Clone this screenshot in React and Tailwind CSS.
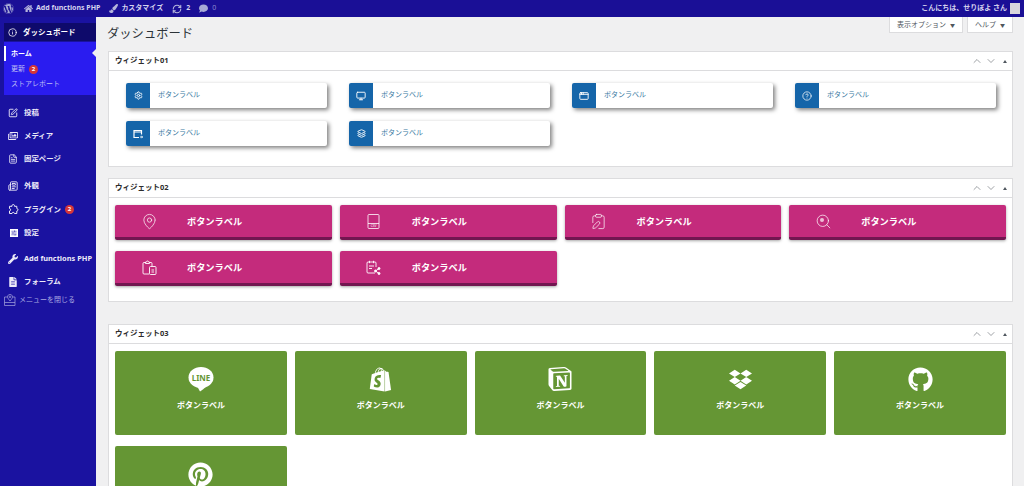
// WordPress admin dashboard with three button widgets
import { Info, SquarePen, FileText, Newspaper, SlidersHorizontal, RefreshCw, ChevronUp, ChevronDown, Settings, Monitor, AppWindow, CircleHelp, Layers, MapPin, ClipboardPen, Search } from 'lucide-react'
import { FaWordpress, FaDropbox, FaGithub, FaPinterest, FaShopify, FaHome, FaPaintBrush, FaComment, FaWrench, FaFileAlt, FaRegImages } from 'react-icons/fa'
import { SiNotion } from 'react-icons/si'

const LABEL = 'ボタンラベル'

function LineIcon() {
  return (
    <svg width="26" height="25" viewBox="0 0 26 25">
      <ellipse cx="13" cy="10.500" rx="12.500" ry="10.500" fill="white" />
      <path d="M9 19l3 5.500c1.500-1 5-3.500 6-5z" fill="white" />
      <text x="13" y="13.500" fontSize="8" fontWeight="700" textAnchor="middle" fill="#659634">LINE</text>
    </svg>
  )
}

function CsvIcon() {
  return (
    <svg width="13" height="15" viewBox="0 0 13 15" fill="none" stroke="currentColor" strokeWidth="0.8">
      <path d="M2 .5h9a1 1 0 0 1 1 1v12a1 1 0 0 1-1 1H2a1 1 0 0 1-1-1v-12a1 1 0 0 1 1-1zM1 9.500h11" />
      <text x="6.500" y="13" fontSize="3.200" textAnchor="middle" fill="currentColor" stroke="none">CSV</text>
    </svg>
  )
}

function ClipFileIcon() {
  return (
    <svg width="15" height="15" viewBox="0 0 15 15" fill="none" stroke="currentColor" strokeWidth="0.9">
      <path d="M7 14H2a1 1 0 0 1-1-1V3.500a1 1 0 0 1 1-1h1.500M7.500 2.500H9a1 1 0 0 1 1 1V6M3.500 3.500V2h1a1 1 0 0 1 2 0h1v1.500z" />
      <rect x="7.500" y="6.500" width="6.500" height="8" rx="1" />
      <path d="M9.500 10h2.500M9.500 12h2.500" />
    </svg>
  )
}

function CalendarShareIcon() {
  return (
    <svg width="15" height="15" viewBox="0 0 15 15" fill="none" stroke="currentColor" strokeWidth="0.9">
      <path d="M9 13H2a1 1 0 0 1-1-1V3a1 1 0 0 1 1-1h7a1 1 0 0 1 1 1v4M3.500 .8v2.400M7.500 .8v2.400M3 6h5M3 8.500h3" />
      <circle cx="13" cy="8.500" r="1" fill="currentColor" />
      <circle cx="9.500" cy="11" r="1" fill="currentColor" />
      <circle cx="13" cy="13.500" r="1" fill="currentColor" />
      <path d="M13 8.500l-3.500 2.500 3.500 2.500" />
    </svg>
  )
}

function ZoomIcon() {
  return (
    <span className="relative flex items-center justify-center">
      <Search size={17} strokeWidth={1} />
      <span className="absolute left-[5px] top-[5px] h-[4px] w-[4px] rounded-full bg-white/70" />
    </span>
  )
}

function WindowArrowIcon() {
  return (
    <svg width="10" height="10" viewBox="0 0 10 10" fill="none" stroke="currentColor" strokeWidth="1.200">
      <path d="M8.500 5.500V1.500h-7.500v7h5M1 3h7.500" />
      <path d="M7 8h2.500M8.500 6.800l1 1.200-1 1.200" strokeWidth="0.9" />
    </svg>
  )
}

function PluginIcon() {
  return (
    <svg width="11" height="11" viewBox="0 0 11 11" fill="none" stroke="currentColor" strokeWidth="1">
      <path d="M4 1.500c0-1.200 2.500-1.200 2.500 0v.8h2.300v2.200c1.600 0 1.600 2.500 0 2.500v2.500H6.500c0-1.500-2.500-1.500-2.500 0H1.500V7c1.500 0 1.500-2.500 0-2.500V2.300H4z" />
    </svg>
  )
}

function CloseMenuIcon() {
  return (
    <svg width="12" height="12" viewBox="0 0 12 12" fill="none" stroke="currentColor" strokeWidth="0.7">
      <path d="M3.500 3H.5v8.500h10.500V3H8.500M.5 8.500h10.500" />
      <path d="M6 .5c1.500 0 2.500 1 2.500 2.300C8.500 4.300 7 5.500 6 7 5 5.500 3.500 4.300 3.500 2.800 3.500 1.500 4.500.5 6 .5z" />
      <circle cx="6" cy="2.800" r="0.800" />
    </svg>
  )
}

function BlueButton({ icon }) {
  return (
    <a className="flex h-[25px] overflow-hidden rounded-[2px] bg-white shadow-[2px_2px_4px_rgba(0,0,0,0.5)]">
      <span className="flex w-[24px] items-center justify-center bg-[#1565a9] text-white">{icon}</span>
      <span className="flex items-center pl-[8px] text-[7px] text-[#3a7a9f]">{LABEL}</span>
    </a>
  )
}

function PinkButton({ icon }) {
  return (
    <a className="flex h-[35px] items-center rounded-[2px] border-b-[3px] border-[#721650] bg-[#c42b7c] text-white shadow-[0_1px_3px_rgba(0,0,0,0.35)]">
      <span className="flex w-[68px] justify-center">{icon}</span>
      <span className="pl-[4px] pt-[2px] text-[9.2px] font-bold">{LABEL}</span>
    </a>
  )
}

function GreenButton({ icon }) {
  return (
    <a className="flex h-[84px] flex-col items-center rounded-[2px] bg-[#659634] pt-[15px] text-white">
      <span className="flex h-[26px] items-center justify-center">{icon}</span>
      <span className="mt-[7px] text-[8px] font-bold">{LABEL}</span>
    </a>
  )
}

function Postbox({ title, height, children }) {
  return (
    <section className={`border border-[#dcdcde] bg-white ${height}`}>
      <header className="flex h-[19px] items-center justify-between border-b border-[#dcdcde] pl-[6px] pr-[5px]">
        <h2 className="text-[7.5px] font-bold text-[#2c2c2c]">{title}</h2>
        <div className="flex items-center gap-[2px] text-[#6b6f75]">
          <ChevronUp size={12} strokeWidth={1.3} />
          <ChevronDown size={12} strokeWidth={1.3} />
          <span className="ml-[4px] h-0 w-0 border-x-[2px] border-b-[3px] border-x-transparent border-b-[#50575e]" />
        </div>
      </header>
      {children}
    </section>
  )
}

function MenuItem({ icon, label, badge, className = '' }) {
  return (
    <li className={`flex h-[23px] items-center pl-[8px] text-[7.4px] font-bold text-[#eceaf8] ${className}`}>
      <span className="flex w-[16px] shrink-0 items-center">{icon}</span>
      <span className="whitespace-nowrap">{label}</span>
      {badge && <Badge />}
    </li>
  )
}

function Badge() {
  return (
    <span className="ml-[4px] flex h-[9px] w-[9px] items-center justify-center rounded-full bg-[#d63638] text-[6px] font-bold text-white">2</span>
  )
}

function AdminBar() {
  return (
    <div className="flex h-[17px] items-center bg-[#1a0f96] text-[7px] font-bold text-[#d5d3ee]">
      <FaWordpress size={11} className="ml-[3px] text-[#a7aad6]" />
      <FaHome size={9} className="ml-[10px] text-[#b5b5dc]" />
      <span className="ml-[3px] whitespace-nowrap">Add functions PHP</span>
      <FaPaintBrush size={9} className="ml-[9px] text-[#b5b5dc]" />
      <span className="ml-[3px] whitespace-nowrap">カスタマイズ</span>
      <RefreshCw size={10} strokeWidth={2.6} className="ml-[9px] text-[#b5b5dc]" />
      <span className="ml-[4px]">2</span>
      <FaComment size={9} className="ml-[9px] text-[#a7aad6]" />
      <span className="ml-[4px] font-normal text-[#8d8bd0]">0</span>
      <span className="ml-auto whitespace-nowrap">こんにちは、せりぽよ さん</span>
      <span className="ml-[3px] mr-[4px] h-[11px] w-[10px] bg-[#d9d6dc]" />
    </div>
  )
}

function Sidebar() {
  return (
    <aside className="w-[96px] shrink-0 bg-[#1a12a0] pt-[6px]">
      <div className="ml-[4px] flex h-[18px] items-center bg-[#0e0a6b] pl-[4px] text-[7.5px] font-bold text-white">
        <Info size={9} className="mr-[6px]" />
        <span className="pt-[2px]">ダッシュボード</span>
      </div>
      <div className="relative ml-[4px] mt-[1px] bg-[#2a1cf0] py-[4px] text-[7px] text-[#bdbcf5]">
        <span className="absolute right-0 top-[7px] h-0 w-0 border-y-[4px] border-r-[4px] border-y-transparent border-r-[#f0f0f1]" />
        <div className="flex h-[15px] items-center border-l-2 border-white pl-[5px] pt-[2px] font-bold text-white">ホーム</div>
        <div className="flex h-[15px] items-center pl-[7px] pt-[2px]">更新<Badge /></div>
        <div className="flex h-[15px] items-center pl-[7px] pt-[1px]">ストアレポート</div>
      </div>
      <ul className="mt-[6px]">
        <MenuItem icon={<SquarePen size={10} strokeWidth={2.2} />} label="投稿" />
        <MenuItem icon={<FaRegImages size={10} />} label="メディア" />
        <MenuItem icon={<FileText size={10} strokeWidth={2} />} label="固定ページ" />
        <MenuItem icon={<Newspaper size={10} strokeWidth={2.2} />} label="外観" className="mt-[4px]" />
        <MenuItem icon={<PluginIcon />} label="プラグイン" badge className="mt-[1px]" />
        <MenuItem icon={<SlidersHorizontal size={8} className="ml-[2px] bg-white p-[1px] text-[#1a12a0]" />} label="設定" />
        <MenuItem icon={<FaWrench size={10} />} label="Add functions PHP" className="mt-[3px]" />
        <MenuItem icon={<FaFileAlt size={10} />} label="フォーラム" />
      </ul>
      <div className="-mt-[1px] flex h-[16px] items-center pl-[4px] text-[7px] text-[#a9a8e0]">
        <CloseMenuIcon />
        <span className="ml-[3px]">メニューを閉じる</span>
      </div>
    </aside>
  )
}

const BLUE = [
  <Settings size={9} strokeWidth={2.4} />,
  <Monitor size={10} strokeWidth={2.2} />,
  <AppWindow size={10} strokeWidth={2.2} />,
  <CircleHelp size={10} strokeWidth={1.8} />,
  <WindowArrowIcon />,
  <Layers size={9} strokeWidth={2.4} />,
]
const PINK = [
  <MapPin size={17} strokeWidth={1} />,
  <CsvIcon />,
  <ClipboardPen size={17} strokeWidth={1} />,
  <ZoomIcon />,
  <ClipFileIcon />,
  <CalendarShareIcon />,
]
const GREEN = [
  <LineIcon />,
  <FaShopify size={25} />,
  <SiNotion size={24} />,
  <FaDropbox size={23} />,
  <FaGithub size={25} />,
  <FaPinterest size={25} />,
]

export default function App() {
  return (
    <div className="h-[486px] overflow-hidden bg-[#f0f0f1] font-['Noto_Sans','Noto_Sans_CJK_JP',sans-serif]">
      <AdminBar />
      <div className="flex h-[469px]">
        <Sidebar />
        <main className="min-w-0 flex-1 pl-[12px] pr-[11px]">
          <div className="flex h-[34px] items-start justify-between">
            <h1 className="-ml-[1px] mt-[8px] text-[12.3px] leading-[18px] text-[#2c3338]">ダッシュボード</h1>
            <div className="flex gap-[4px]">
              <button className="flex h-[16px] w-[74px] items-center justify-center gap-[4px] border border-t-0 border-[#dcdcde] bg-white pt-[2px] text-[7px] text-[#50575e]">表示オプション <span className="text-[5px]">▼</span></button>
              <button className="flex h-[16px] w-[46px] items-center justify-center gap-[4px] border border-t-0 border-[#dcdcde] bg-white pt-[2px] text-[7px] text-[#50575e]">ヘルプ <span className="text-[5px]">▼</span></button>
            </div>
          </div>

          <Postbox title="ウィジェット01" height="h-[116px]">
            <div className="grid grid-cols-4 gap-x-[22px] gap-y-[13px] pl-[17px] pr-[16px] pt-[12px]">
              {BLUE.map((icon, i) => <BlueButton key={i} icon={icon} />)}
            </div>
          </Postbox>

          <div className="mt-[11px]">
            <Postbox title="ウィジェット02" height="h-[124px]">
              <div className="grid grid-cols-4 gap-x-[8px] gap-y-[11px] px-[6px] pt-[7px]">
                {PINK.map((icon, i) => <PinkButton key={i} icon={icon} />)}
              </div>
            </Postbox>
          </div>

          <div className="mt-[22px]">
            <Postbox title="ウィジェット03" height="h-[220px]">
              <div className="grid grid-cols-5 gap-x-[8px] gap-y-[11px] px-[6px] pt-[7px]">
                {GREEN.map((icon, i) => <GreenButton key={i} icon={icon} />)}
              </div>
            </Postbox>
          </div>
        </main>
      </div>
    </div>
  )
}
